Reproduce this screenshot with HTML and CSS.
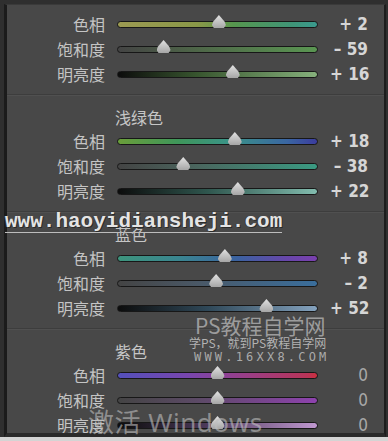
FILE: index.html
```html
<!DOCTYPE html>
<html>
<head>
<meta charset="utf-8">
<link rel="stylesheet" href="styles.css">
</head>
<body>
<div class="screen">
  <div class="panel">
    <section class="group first">
      <div class="row"><span class="label">色相</span><div class="track g-hue"><span class="thumb" style="left:50.7%"></span></div><span class="value">+ 2</span></div>
      <div class="row"><span class="label">饱和度</span><div class="track g-sat"><span class="thumb" style="left:22.9%"></span></div><span class="value">– 59</span></div>
      <div class="row"><span class="label">明亮度</span><div class="track g-lum"><span class="thumb" style="left:57.7%"></span></div><span class="value">+ 16</span></div>
    </section>
    <section class="group aqua">
      <div class="head">浅绿色</div>
      <div class="row"><span class="label">色相</span><div class="track a-hue"><span class="thumb" style="left:58.7%"></span></div><span class="value">+ 18</span></div>
      <div class="row"><span class="label">饱和度</span><div class="track a-sat"><span class="thumb" style="left:32.8%"></span></div><span class="value">– 38</span></div>
      <div class="row"><span class="label">明亮度</span><div class="track a-lum"><span class="thumb" style="left:60.2%"></span></div><span class="value">+ 22</span></div>
    </section>
    <section class="group blue">
      <div class="head">蓝色</div>
      <div class="row"><span class="label">色相</span><div class="track b-hue"><span class="thumb" style="left:53.7%"></span></div><span class="value">+ 8</span></div>
      <div class="row"><span class="label">饱和度</span><div class="track b-sat"><span class="thumb" style="left:49.3%"></span></div><span class="value">– 2</span></div>
      <div class="row"><span class="label">明亮度</span><div class="track b-lum"><span class="thumb" style="left:74.6%"></span></div><span class="value">+ 52</span></div>
    </section>
    <section class="group purple">
      <div class="head">紫色</div>
      <div class="row"><span class="label">色相</span><div class="track p-hue"><span class="thumb" style="left:50%"></span></div><span class="value dim">0</span></div>
      <div class="row"><span class="label">饱和度</span><div class="track p-sat"><span class="thumb" style="left:50%"></span></div><span class="value dim">0</span></div>
      <div class="row"><span class="label">明亮度</span><div class="track p-lum"><span class="thumb" style="left:50%"></span></div><span class="value dim">0</span></div>
    </section>
  </div>
</div>
<div class="wm-url">www.haoyidiansheji.com</div>
<div class="wm-ps">PS教程自学网</div>
<div class="wm-ps-sub">学PS，就到PS教程自学网</div>
<div class="wm-ps-www">WWW.16XX8.COM</div>
<div class="wm-win">激活 Windows</div>
</body>
</html>
```
FILE: styles.css
```css
html, body {
  margin: 0;
  padding: 0;
}
body {
  width: 388px;
  height: 441px;
  overflow: hidden;
  background: #d4d4d4;
  position: relative;
  font-family: "Noto Sans CJK SC", "Noto Sans", sans-serif;
}
.screen {
  box-sizing: border-box;
  height: 437px;
  background: #2f2f2f;
  padding: 4px 2px 0 4px;
}
.panel {
  box-sizing: border-box;
  height: 433px;
  background: #484848;
  border-left: 3px solid #1b1b1b;
  border-right: 2px solid #1d1d1d;
  border-top: 1px solid #3a3a3a;
  border-bottom: 4px solid #2a2a2a;
  overflow: hidden;
  padding-top: 7px;
}
.group {
  padding-bottom: 7px;
  padding-top: 10px;
  border-top: 1px solid #3d3d3d;
  box-shadow: inset 0 1px 0 #505050;
}
.group.first {
  padding-top: 0;
  border-top: none;
  box-shadow: none;
}
.head {
  height: 24px;
  line-height: 24px;
  padding-left: 108px;
  font-size: 16px;
  color: #c6c6c6;
}
.row {
  display: grid;
  grid-template-columns: 98px 201px 1fr;
  column-gap: 12px;
  align-items: center;
  height: 25px;
  padding-right: 16px;
}
.label {
  text-align: right;
  font-size: 16px;
  line-height: 25px;
  color: #c4c4c4;
  white-space: nowrap;
}
.value {
  text-align: right;
  font-family: "Liberation Sans Narrow", "DejaVu Sans Condensed", "Liberation Sans", sans-serif;
  font-weight: bold;
  font-size: 17px;
  color: #d6d6d6;
  line-height: 25px;
  white-space: nowrap;
}
.value.dim {
  font-weight: normal;
  color: #a8a8a8;
}
.track {
  position: relative;
  box-sizing: border-box;
  height: 7px;
  border: 1.5px solid #171717;
  border-radius: 4px;
}
.thumb {
  position: absolute;
  top: -7px;
  width: 14px;
  height: 13px;
  margin-left: -7px;
  background: linear-gradient(#e2e2e2, #a6a6a6);
  clip-path: polygon(50% 0, 90% 50%, 100% 76%, 86% 100%, 14% 100%, 0 76%, 10% 50%);
  filter: drop-shadow(0 1px 0 #222);
}
/* green */
.g-hue { background: linear-gradient(90deg, #9c9a52 0%, #8a9848 40%, #56964e 58%, #3f9478 88%, #3a9a8e 100%); }
.g-sat { background: linear-gradient(90deg, #444 0%, #4e6648 40%, #5a9652 100%); }
.g-lum { background: linear-gradient(90deg, #0c0c0c 0%, #38562f 40%, #86b07c 100%); }
/* aqua */
.a-hue { background: linear-gradient(90deg, #6a9e3a 0%, #3f965a 30%, #3a9486 55%, #3a66a2 85%, #3b3c9e 100%); }
.a-sat { background: linear-gradient(90deg, #444 0%, #4a665e 40%, #3a9a82 100%); }
.a-lum { background: linear-gradient(90deg, #0c0c0c 0%, #2f564e 45%, #82bcae 100%); }
/* blue */
.b-hue { background: linear-gradient(90deg, #3d947c 0%, #3a8690 30%, #3b62a0 60%, #6846aa 85%, #7a40ae 100%); }
.b-sat { background: linear-gradient(90deg, #444 0%, #4a5866 40%, #3a6e9c 100%); }
.b-lum { background: linear-gradient(90deg, #0c0c0c 0%, #2f4858 45%, #84a2be 100%); }
/* purple */
.p-hue { background: linear-gradient(90deg, #5450ba 0%, #7846ae 35%, #9a3e86 65%, #b83458 95%, #cc2f3e 100%); }
.p-sat { background: linear-gradient(90deg, #444 0%, #5c4a66 40%, #8e42ae 100%); }
.p-lum { background: linear-gradient(90deg, #0c0c0c 0%, #4c3a5a 45%, #c098d0 100%); }

/* watermarks overlaid on the image */
.wm-url {
  position: absolute;
  left: 5px;
  top: 211px;
  font-family: "Liberation Mono", monospace;
  font-weight: bold;
  font-size: 21px;
  line-height: 21px;
  color: #e4e4e4;
  text-shadow: 1px 1px 0 #2a2a2a, -1px 0 0 #3a3a3a;
  border-bottom: 1px solid #bdbdbd;
  white-space: nowrap;
}
.wm-ps {
  position: absolute;
  left: 195px;
  top: 312px;
  font-size: 21px;
  line-height: 26px;
  letter-spacing: 0;
  color: rgba(215, 215, 215, 0.6);
  white-space: nowrap;
}
.wm-ps-sub {
  position: absolute;
  left: 189px;
  top: 336px;
  font-size: 12px;
  line-height: 14px;
  color: rgba(215, 215, 215, 0.75);
  white-space: nowrap;
}
.wm-ps-www {
  position: absolute;
  left: 194px;
  top: 350px;
  font-family: "DejaVu Sans Mono", monospace;
  font-size: 12px;
  line-height: 14px;
  letter-spacing: 3.2px;
  color: rgba(215, 215, 215, 0.7);
  white-space: nowrap;
}
.wm-win {
  position: absolute;
  left: 88px;
  top: 406px;
  font-family: "Noto Sans", "Noto Sans CJK SC", sans-serif;
  font-size: 26px;
  line-height: 32px;
  letter-spacing: 0.5px;
  color: rgba(190, 190, 190, 0.6);
  white-space: nowrap;
}
```
